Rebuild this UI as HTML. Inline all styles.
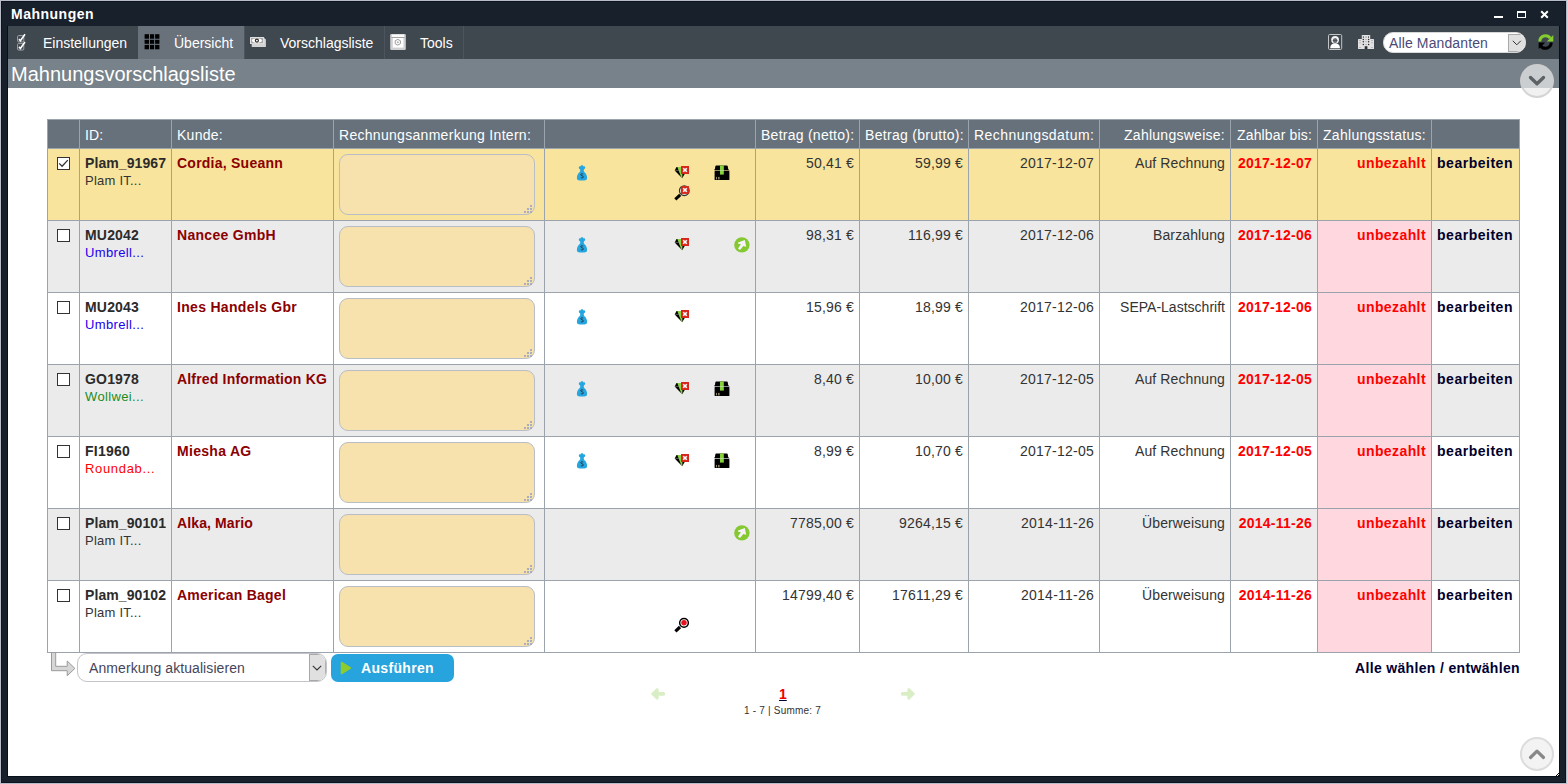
<!DOCTYPE html>
<html><head><meta charset="utf-8">
<style>
*{margin:0;padding:0;box-sizing:border-box}
html,body{width:1567px;height:784px;overflow:hidden;background:#b8bcc6;font-family:"Liberation Sans",sans-serif}
#win{position:absolute;left:1px;top:1px;width:1565px;height:782px;background:#17202b;border:1px solid #0b1420}
.abs{position:absolute}
#wt{position:absolute;left:11px;top:6px;font-size:14px;font-weight:bold;color:#fff;line-height:17px;letter-spacing:0.495px}
#content{position:absolute;left:8px;top:26px;width:1551px;height:750px;background:#fff}
#tb{position:absolute;left:8px;top:26px;width:1551px;height:33px;background:#3f474f}
.tab{position:absolute;top:27px;height:33px;color:#fff;font-size:14px;line-height:33px}
.sep{position:absolute;top:26px;width:1px;height:33px;background:#4d545e}
#title{position:absolute;left:8px;top:59px;width:1551px;height:29px;background:#77828a}
#titletext{position:absolute;left:11px;top:63px;font-size:20px;color:#fff;line-height:23px}
.hd{position:absolute;background:#66717b}
.rb{position:absolute}
.vl{position:absolute;width:1px;background:#9ba3ad}
.hl{position:absolute;height:1px;background:#9ba3ad}
.ht{position:absolute;color:#fff;font-size:14px;line-height:17px;padding:0 5px;white-space:nowrap;letter-spacing:0.28px}
.tx{position:absolute;font-size:14px;line-height:17px;white-space:nowrap;letter-spacing:0.28px}
.tx.b{font-weight:bold}
.tx.s{font-size:13px;letter-spacing:0.24px}
.cb{position:absolute;width:13px;height:13px;border:1px solid #333;background:#fff;padding:0}
.cb svg{position:absolute;left:0;top:0}
.ta{position:absolute;width:196px;height:61px;border:1px solid #b9bdc5;border-radius:9px;background:#f7e1ad}
.grip{position:absolute;left:184px;top:50px}
.ic{position:absolute}
</style></head><body>
<div id="win"></div>
<div id="wt">Mahnungen</div>
<!-- window controls -->
<div class="abs" style="left:1494px;top:16px;width:9px;height:2px;background:#fff"></div>
<div class="abs" style="left:1517px;top:11px;width:9px;height:7px;border:1px solid #fff;border-top-width:2px"></div>
<svg class="abs" style="left:1540px;top:10px" width="9" height="9" viewBox="0 0 9 9"><path d="M1.2 1.2l6.6 6.6M7.8 1.2l-6.6 6.6" stroke="#fff" stroke-width="2"/></svg>
<div class="abs" style="left:7px;top:26px;width:1553px;height:751px;border:1px solid #06101c;border-top:none"></div>
<div id="content"></div>
<div id="tb"></div>
<div class="abs" style="left:138px;top:26px;width:106px;height:33px;background:#69717b"></div>
<div class="sep" style="left:244px"></div>
<div class="sep" style="left:384px"></div>
<div class="sep" style="left:463px"></div>
<!-- tab icons -->
<svg class="abs" style="left:16px;top:33px" width="11" height="18" viewBox="0 0 11 18">
 <rect x="1.6" y="2.6" width="6.2" height="6.2" rx="1" fill="none" stroke="#a4a7ab" stroke-width="1"/>
 <rect x="1.6" y="10.4" width="6.2" height="6.6" rx="1" fill="none" stroke="#a4a7ab" stroke-width="1"/>
 <path d="M3 6.1L4.4 7.7L9 1.2M3 13.9L4.4 15.5L9 9" fill="none" stroke="#fff" stroke-width="1.6"/>
</svg>
<div class="tab" style="left:43px">Einstellungen</div>
<svg class="abs" style="left:144px;top:34px" width="16" height="16" viewBox="0 0 16 16"><g fill="#000">
<rect x="0.6" y="0.2" width="4.4" height="4.5"/><rect x="6" y="0.2" width="4.1" height="4.5"/><rect x="11.1" y="0.2" width="4.3" height="4.5"/>
<rect x="0.6" y="5.8" width="4.4" height="4"/><rect x="6" y="5.8" width="4.1" height="4"/><rect x="11.1" y="5.8" width="4.3" height="4"/>
<rect x="0.6" y="10.9" width="4.4" height="4.4"/><rect x="6" y="10.9" width="4.1" height="4.4"/><rect x="11.1" y="10.9" width="4.3" height="4.4"/></g></svg>
<div class="tab" style="left:174px">Übersicht</div>
<svg class="abs" style="left:250px;top:37px" width="16" height="10" viewBox="0 0 16 10">
 <path d="M1.7 1h12.4l1.8 1.6v7.4h-14.2z" fill="#d4d4d4"/>
 <rect x="0" y="0" width="14.1" height="7.1" rx="0.6" fill="#e6e6e6"/>
 <rect x="1" y="0.9" width="12.1" height="5.3" fill="#a8a8a8"/>
 <ellipse cx="6.9" cy="3.6" rx="5" ry="2.1" fill="#fff"/>
 <circle cx="6.9" cy="3.6" r="1.5" fill="none" stroke="#2a2a2a" stroke-width="1.2"/>
</svg>
<div class="tab" style="left:280px">Vorschlagsliste</div>
<svg class="abs" style="left:390px;top:34px" width="16" height="16" viewBox="0 0 16 16">
 <rect x="0.2" y="0.1" width="15.6" height="15.8" rx="1.2" fill="#d0d0d0"/>
 <rect x="2" y="0.6" width="12" height="2.6" fill="#fafafa"/>
 <rect x="1.5" y="3.2" width="13" height="0.7" fill="#8a8a8a"/>
 <rect x="2.8" y="4" width="10.6" height="9.6" fill="#fff"/>
 <path d="M7.8 5.4l2.6 1.3v3l-2.6 1.4l-2.6-1.4v-3z" fill="none" stroke="#9a9a9a" stroke-width="1"/>
 <circle cx="7.8" cy="8.2" r="1" fill="#b0b0b0"/>
</svg>
<div class="tab" style="left:420px">Tools</div>
<!-- toolbar right -->
<svg class="abs" style="left:1328px;top:34px" width="15" height="16" viewBox="0 0 15 16">
 <rect x="0.5" y="0.5" width="13.2" height="15" rx="1.2" fill="none" stroke="#c4c4c4" stroke-width="1"/>
 <path d="M2.2 14.2c0-3.2 2-4.6 4.9-4.6s4.9 1.4 4.9 4.6z" fill="#fff"/>
 <circle cx="7.1" cy="5.8" r="3.9" fill="#f4f4f4"/>
 <ellipse cx="7.1" cy="6.6" rx="2.3" ry="2.5" fill="#6a6e74"/>
 <path d="M4.9 6.4h4.4" stroke="#4a4e54" stroke-width="0.9"/>
</svg>
<svg class="abs" style="left:1358px;top:35px" width="16" height="14" viewBox="0 0 16 14">
 <g fill="#e2e2e2">
 <rect x="3.8" y="0" width="8.4" height="14" rx="0.6"/>
 <rect x="0" y="4" width="4.2" height="10" rx="0.6"/>
 <rect x="11.8" y="4" width="4.2" height="10" rx="0.6"/>
 </g>
 <g fill="#2a2e34">
 <circle cx="5.3" cy="4.5" r="0.75"/><circle cx="10.6" cy="4.5" r="0.75"/>
 <circle cx="5.3" cy="6.8" r="0.75"/><circle cx="10.6" cy="6.8" r="0.75"/>
 <circle cx="5.3" cy="9.6" r="0.75"/><circle cx="10.6" cy="9.6" r="0.75"/>
 <rect x="4.9" y="1.3" width="0.8" height="1.6"/><rect x="10.2" y="1.3" width="0.8" height="1.6"/>
 <rect x="6.7" y="11.2" width="2.7" height="2.8"/>
 </g>
 <g fill="#9a9a9a">
 <rect x="7.3" y="1.5" width="1.4" height="1.2"/><rect x="7.3" y="4.1" width="1.4" height="0.8"/><rect x="7.3" y="6.4" width="1.4" height="0.8"/><rect x="7.3" y="9.2" width="1.4" height="0.8"/>
 <rect x="1.2" y="5.2" width="1.6" height="0.7"/><rect x="1.2" y="7.5" width="1.6" height="0.7"/><rect x="1.2" y="12" width="1.6" height="0.7"/>
 <rect x="13.2" y="5.2" width="1.6" height="0.7"/><rect x="13.2" y="7.5" width="1.6" height="0.7"/><rect x="13.2" y="12" width="1.6" height="0.7"/>
 </g>
</svg>
<div class="abs" style="left:1383px;top:32px;width:143px;height:21px;border:1px solid #d8d8d8;border-radius:10px;background:#fff;overflow:hidden">
 <div class="abs" style="left:5px;top:2px;font-size:14px;line-height:17px;color:#4a4a78;letter-spacing:0.122px">Alle Mandanten</div>
 <div class="abs" style="left:124px;top:1px;width:20px;height:18px;background:#e0e0e0;border:1px solid #aaa;border-right:none"></div>
 <svg class="abs" style="left:128px;top:7px" width="10" height="6" viewBox="0 0 10 6"><path d="M0.8 0.8l4 4l4-4" fill="none" stroke="#333" stroke-width="1"/></svg>
</div>
<svg class="abs" style="left:1538px;top:34px" width="16" height="16" viewBox="0 0 16 16">
 <path d="M1.8 7.4A5.7 5.7 0 0 1 12.2 4.2" fill="none" stroke="#84cc30" stroke-width="3"/>
 <path d="M8.8 7.4h6.5v-6.3z" fill="#84cc30"/>
 <path d="M13.2 8.6A5.7 5.7 0 0 1 2.8 11.8" fill="none" stroke="#000" stroke-width="3"/>
 <path d="M7.2 8.6h-6.5v6.3z" fill="#000"/>
</svg>
<div id="title"></div>
<div id="titletext">Mahnungsvorschlagsliste</div>
<div class="abs" style="left:1520px;top:64px;width:34px;height:34px;border-radius:50%;background:rgba(236,236,236,0.72);border:2px solid rgba(205,205,205,0.8)"></div>
<svg class="abs" style="left:1527px;top:73px" width="20" height="15" viewBox="0 0 20 15"><path d="M3.5 4.5l6.5 6.3l6.5-6.3" fill="none" stroke="#5d6166" stroke-width="3.3" stroke-linecap="round" stroke-linejoin="round"/></svg>

<div class="hd" style="left:47px;top:119px;width:1473px;height:30px"></div>
<div class="rb" style="left:47px;top:148px;width:1473px;height:73px;background:#f8e49c"></div>
<div class="rb" style="left:47px;top:220px;width:1473px;height:73px;background:#ebebeb"></div>
<div class="rb" style="left:1317px;top:220px;width:115px;height:73px;background:#ffd7de"></div>
<div class="rb" style="left:47px;top:292px;width:1473px;height:73px;background:#ffffff"></div>
<div class="rb" style="left:1317px;top:292px;width:115px;height:73px;background:#ffd7de"></div>
<div class="rb" style="left:47px;top:364px;width:1473px;height:73px;background:#ebebeb"></div>
<div class="rb" style="left:1317px;top:364px;width:115px;height:73px;background:#ffd7de"></div>
<div class="rb" style="left:47px;top:436px;width:1473px;height:73px;background:#ffffff"></div>
<div class="rb" style="left:1317px;top:436px;width:115px;height:73px;background:#ffd7de"></div>
<div class="rb" style="left:47px;top:508px;width:1473px;height:73px;background:#ebebeb"></div>
<div class="rb" style="left:1317px;top:508px;width:115px;height:73px;background:#ffd7de"></div>
<div class="rb" style="left:47px;top:580px;width:1473px;height:73px;background:#ffffff"></div>
<div class="rb" style="left:1317px;top:580px;width:115px;height:73px;background:#ffd7de"></div>
<div class="vl" style="left:47px;top:119px;height:534px"></div>
<div class="vl" style="left:79px;top:119px;height:534px"></div>
<div class="vl" style="left:171px;top:119px;height:534px"></div>
<div class="vl" style="left:333px;top:119px;height:534px"></div>
<div class="vl" style="left:544px;top:119px;height:534px"></div>
<div class="vl" style="left:755px;top:119px;height:534px"></div>
<div class="vl" style="left:859px;top:119px;height:534px"></div>
<div class="vl" style="left:968px;top:119px;height:534px"></div>
<div class="vl" style="left:1099px;top:119px;height:534px"></div>
<div class="vl" style="left:1230px;top:119px;height:534px"></div>
<div class="vl" style="left:1317px;top:119px;height:534px"></div>
<div class="vl" style="left:1431px;top:119px;height:534px"></div>
<div class="vl" style="left:1519px;top:119px;height:534px"></div>
<div class="hl" style="left:47px;top:119px;width:1473px"></div>
<div class="hl" style="left:47px;top:148px;width:1473px"></div>
<div class="hl" style="left:47px;top:220px;width:1473px"></div>
<div class="hl" style="left:47px;top:292px;width:1473px"></div>
<div class="hl" style="left:47px;top:364px;width:1473px"></div>
<div class="hl" style="left:47px;top:436px;width:1473px"></div>
<div class="hl" style="left:47px;top:508px;width:1473px"></div>
<div class="hl" style="left:47px;top:580px;width:1473px"></div>
<div class="hl" style="left:47px;top:652px;width:1473px"></div>
<div class="ht" style="left:80px;top:127px;width:91px;text-align:left;letter-spacing:0.157px;">ID:</div>
<div class="ht" style="left:172px;top:127px;width:161px;text-align:left;letter-spacing:0.255px;">Kunde:</div>
<div class="ht" style="left:334px;top:127px;width:210px;text-align:left;letter-spacing:0.295px;">Rechnungsanmerkung Intern:</div>
<div class="ht" style="left:756px;top:127px;width:103px;text-align:right;letter-spacing:0.257px;">Betrag (netto):</div>
<div class="ht" style="left:860px;top:127px;width:108px;text-align:right;letter-spacing:0.303px;">Betrag (brutto):</div>
<div class="ht" style="left:969px;top:127px;width:130px;text-align:right;letter-spacing:0.448px;">Rechnungsdatum:</div>
<div class="ht" style="left:1100px;top:127px;width:130px;text-align:right;letter-spacing:0.263px;">Zahlungsweise:</div>
<div class="ht" style="left:1231px;top:127px;width:86px;text-align:right;letter-spacing:0.155px;">Zahlbar bis:</div>
<div class="ht" style="left:1318px;top:127px;width:113px;text-align:right;letter-spacing:0.274px;">Zahlungsstatus:</div>
<div class="cb" style="left:57px;top:157px"><svg width="11" height="11" viewBox="0 0 11 11"><path d="M1.2 5.4L4.1 8.3L9.8 2.1" fill="none" stroke="#333" stroke-width="1.3"/></svg></div>
<div class="tx b" style="left:85px;top:155px;color:#2b2b2b;letter-spacing:0.082px;">Plam_91967</div>
<div class="tx s" style="left:85px;top:172px;color:#333;letter-spacing:0.238px;">Plam IT...</div>
<div class="tx b" style="left:177px;top:155px;color:#8b0000;letter-spacing:0.237px;">Cordia, Sueann</div>
<div class="ta" style="left:339px;top:154px"><svg class="grip" width="8" height="8" viewBox="0 0 8 8"><g fill="#a9aeb9"><rect x="6" y="0" width="2" height="2"/><rect x="3" y="3" width="2" height="2"/><rect x="6" y="3" width="2" height="2"/><rect x="0" y="6" width="2" height="2"/><rect x="3" y="6" width="2" height="2"/><rect x="6" y="6" width="2" height="2"/></g></svg></div>
<svg class="ic" style="left:576px;top:164px" width="12" height="17" viewBox="0 0 12 17">
<path d="M6 1.2c0.9 0 1.3 0.6 1.3 1.2c0.9-0.3 1.9 0.1 1.9 1.2c0 0.9-0.6 1.5-1.3 1.9l-0.2 0.5c0 0.9 0.2 1.6 0.6 2.1c1.9 1.5 2.8 3.9 2.8 5.8c0 1.9-1.3 2.5-5.1 2.5s-5.1-0.6-5.1-2.5c0-1.9 0.9-4.3 2.8-5.8c0.4-0.5 0.6-1.2 0.6-2.1l-0.2-0.5c-0.7-0.4-1.3-1-1.3-1.9c0-1.1 1-1.5 1.9-1.2c0-0.6 0.4-1.2 1.3-1.2z" fill="#25a6e0"/>
<path d="M7.2 10.2c-0.3-0.5-2.5-0.7-2.5 0.5c0 1.1 2.7 0.9 2.7 2.3c0 1.1-2 1.1-2.6 0.6" fill="none" stroke="#243a48" stroke-width="1"/></svg>
<svg class="ic" style="left:674px;top:165px" width="16" height="14" viewBox="0 0 16 14">
<path d="M0.7 5.4L2.5 2h9l1.3 3.4l-4.6 7.9z" fill="#000"/>
<path d="M3.3 2h5.2l-0.2 11h-0.8z" fill="#8ad23e"/>
<path d="M0.9 5.4h4" stroke="#888" stroke-width="0.6"/>
<rect x="7" y="1" width="8" height="8" fill="#d8261a"/>
<path d="M9.2 3.2l3.6 3.6M12.8 3.2l-3.6 3.6" stroke="#f4ffff" stroke-width="1.6"/></svg>
<svg class="ic" style="left:714px;top:164px" width="16" height="17" viewBox="0 0 16 17">
<path d="M3 1.5h9.8q0.9 0 1 1l0.3 2.2l0.6 0.7v0.7h-14.3v-0.7l0.6-0.7l0.3-2.2q0.1-1 1-1z" fill="#000"/>
<rect x="0.6" y="7" width="14.8" height="9.1" rx="0.5" fill="#000"/>
<rect x="0.6" y="6.1" width="14.8" height="0.9" fill="#000" fill-opacity="0.45"/>
<path d="M6 1.5h3.8v9.1h-3.8z" fill="#86d23a"/>
<path d="M6 6.1h3.8v0.9h-3.8z" fill="#b8d890"/>
<rect x="2" y="12.9" width="0.9" height="2.5" fill="#a09a78"/><rect x="4.2" y="12.9" width="1.3" height="2.5" fill="#a09a78"/></svg>
<svg class="ic" style="left:674px;top:185px" width="16" height="16" viewBox="0 0 16 16">
<circle cx="10.3" cy="5.7" r="4.9" fill="#d8d8c8" stroke="#333" stroke-width="1.1"/>
<path d="M1.3 14.4L6.2 9.8" stroke="#000" stroke-width="3"/>
<rect x="7" y="1.1" width="8" height="7.8" fill="#d8261a"/>
<path d="M9.2 3.2l3.6 3.6M12.8 3.2l-3.6 3.6" stroke="#f4ffff" stroke-width="1.6"/></svg>
<div class="tx" style="right:713px;top:155px;color:#333;letter-spacing:0.184px;">50,41 €</div>
<div class="tx" style="right:604px;top:155px;color:#333;letter-spacing:0.184px;">59,99 €</div>
<div class="tx" style="right:473px;top:155px;color:#333;letter-spacing:0.239px;">2017-12-07</div>
<div class="tx" style="right:342px;top:155px;color:#333;letter-spacing:0.106px;">Auf Rechnung</div>
<div class="tx b" style="right:255px;top:155px;color:#ff0000;letter-spacing:0.239px;">2017-12-07</div>
<div class="tx b" style="right:141px;top:155px;color:#ff0000;letter-spacing:0.408px;">unbezahlt</div>
<div class="tx b" style="left:1437px;top:155px;color:#00002b;letter-spacing:0.520px;">bearbeiten</div>
<div class="cb" style="left:57px;top:229px"></div>
<div class="tx b" style="left:85px;top:227px;color:#2b2b2b;letter-spacing:0.181px;">MU2042</div>
<div class="tx s" style="left:85px;top:244px;color:#2200ee;letter-spacing:0.358px;">Umbrell...</div>
<div class="tx b" style="left:177px;top:227px;color:#8b0000;letter-spacing:0.300px;">Nancee GmbH</div>
<div class="ta" style="left:339px;top:226px"><svg class="grip" width="8" height="8" viewBox="0 0 8 8"><g fill="#a9aeb9"><rect x="6" y="0" width="2" height="2"/><rect x="3" y="3" width="2" height="2"/><rect x="6" y="3" width="2" height="2"/><rect x="0" y="6" width="2" height="2"/><rect x="3" y="6" width="2" height="2"/><rect x="6" y="6" width="2" height="2"/></g></svg></div>
<svg class="ic" style="left:576px;top:236px" width="12" height="17" viewBox="0 0 12 17">
<path d="M6 1.2c0.9 0 1.3 0.6 1.3 1.2c0.9-0.3 1.9 0.1 1.9 1.2c0 0.9-0.6 1.5-1.3 1.9l-0.2 0.5c0 0.9 0.2 1.6 0.6 2.1c1.9 1.5 2.8 3.9 2.8 5.8c0 1.9-1.3 2.5-5.1 2.5s-5.1-0.6-5.1-2.5c0-1.9 0.9-4.3 2.8-5.8c0.4-0.5 0.6-1.2 0.6-2.1l-0.2-0.5c-0.7-0.4-1.3-1-1.3-1.9c0-1.1 1-1.5 1.9-1.2c0-0.6 0.4-1.2 1.3-1.2z" fill="#25a6e0"/>
<path d="M7.2 10.2c-0.3-0.5-2.5-0.7-2.5 0.5c0 1.1 2.7 0.9 2.7 2.3c0 1.1-2 1.1-2.6 0.6" fill="none" stroke="#243a48" stroke-width="1"/></svg>
<svg class="ic" style="left:674px;top:237px" width="16" height="14" viewBox="0 0 16 14">
<path d="M0.7 5.4L2.5 2h9l1.3 3.4l-4.6 7.9z" fill="#000"/>
<path d="M3.3 2h5.2l-0.2 11h-0.8z" fill="#8ad23e"/>
<path d="M0.9 5.4h4" stroke="#888" stroke-width="0.6"/>
<rect x="7" y="1" width="8" height="8" fill="#d8261a"/>
<path d="M9.2 3.2l3.6 3.6M12.8 3.2l-3.6 3.6" stroke="#f4ffff" stroke-width="1.6"/></svg>
<svg class="ic" style="left:734px;top:237px" width="16" height="16" viewBox="0 0 16 16">
<circle cx="7.9" cy="7.9" r="7.7" fill="#86c832"/>
<path d="M10.8 3L4 5.5L4.2 6.7L6.9 7.3L4 11.6L6 13L9.3 8.9L12.2 9.8Z" fill="#f6f3f8"/></svg>
<div class="tx" style="right:713px;top:227px;color:#333;letter-spacing:0.184px;">98,31 €</div>
<div class="tx" style="right:604px;top:227px;color:#333;letter-spacing:0.188px;">116,99 €</div>
<div class="tx" style="right:473px;top:227px;color:#333;letter-spacing:0.239px;">2017-12-06</div>
<div class="tx" style="right:342px;top:227px;color:#333;letter-spacing:0.117px;">Barzahlung</div>
<div class="tx b" style="right:255px;top:227px;color:#ff0000;letter-spacing:0.239px;">2017-12-06</div>
<div class="tx b" style="right:141px;top:227px;color:#ff0000;letter-spacing:0.408px;">unbezahlt</div>
<div class="tx b" style="left:1437px;top:227px;color:#00002b;letter-spacing:0.520px;">bearbeiten</div>
<div class="cb" style="left:57px;top:301px"></div>
<div class="tx b" style="left:85px;top:299px;color:#2b2b2b;letter-spacing:0.181px;">MU2043</div>
<div class="tx s" style="left:85px;top:316px;color:#2200ee;letter-spacing:0.358px;">Umbrell...</div>
<div class="tx b" style="left:177px;top:299px;color:#8b0000;letter-spacing:0.303px;">Ines Handels Gbr</div>
<div class="ta" style="left:339px;top:298px"><svg class="grip" width="8" height="8" viewBox="0 0 8 8"><g fill="#a9aeb9"><rect x="6" y="0" width="2" height="2"/><rect x="3" y="3" width="2" height="2"/><rect x="6" y="3" width="2" height="2"/><rect x="0" y="6" width="2" height="2"/><rect x="3" y="6" width="2" height="2"/><rect x="6" y="6" width="2" height="2"/></g></svg></div>
<svg class="ic" style="left:576px;top:308px" width="12" height="17" viewBox="0 0 12 17">
<path d="M6 1.2c0.9 0 1.3 0.6 1.3 1.2c0.9-0.3 1.9 0.1 1.9 1.2c0 0.9-0.6 1.5-1.3 1.9l-0.2 0.5c0 0.9 0.2 1.6 0.6 2.1c1.9 1.5 2.8 3.9 2.8 5.8c0 1.9-1.3 2.5-5.1 2.5s-5.1-0.6-5.1-2.5c0-1.9 0.9-4.3 2.8-5.8c0.4-0.5 0.6-1.2 0.6-2.1l-0.2-0.5c-0.7-0.4-1.3-1-1.3-1.9c0-1.1 1-1.5 1.9-1.2c0-0.6 0.4-1.2 1.3-1.2z" fill="#25a6e0"/>
<path d="M7.2 10.2c-0.3-0.5-2.5-0.7-2.5 0.5c0 1.1 2.7 0.9 2.7 2.3c0 1.1-2 1.1-2.6 0.6" fill="none" stroke="#243a48" stroke-width="1"/></svg>
<svg class="ic" style="left:674px;top:309px" width="16" height="14" viewBox="0 0 16 14">
<path d="M0.7 5.4L2.5 2h9l1.3 3.4l-4.6 7.9z" fill="#000"/>
<path d="M3.3 2h5.2l-0.2 11h-0.8z" fill="#8ad23e"/>
<path d="M0.9 5.4h4" stroke="#888" stroke-width="0.6"/>
<rect x="7" y="1" width="8" height="8" fill="#d8261a"/>
<path d="M9.2 3.2l3.6 3.6M12.8 3.2l-3.6 3.6" stroke="#f4ffff" stroke-width="1.6"/></svg>
<div class="tx" style="right:713px;top:299px;color:#333;letter-spacing:0.184px;">15,96 €</div>
<div class="tx" style="right:604px;top:299px;color:#333;letter-spacing:0.184px;">18,99 €</div>
<div class="tx" style="right:473px;top:299px;color:#333;letter-spacing:0.239px;">2017-12-06</div>
<div class="tx" style="right:342px;top:299px;color:#333;letter-spacing:0.012px;">SEPA-Lastschrift</div>
<div class="tx b" style="right:255px;top:299px;color:#ff0000;letter-spacing:0.239px;">2017-12-06</div>
<div class="tx b" style="right:141px;top:299px;color:#ff0000;letter-spacing:0.408px;">unbezahlt</div>
<div class="tx b" style="left:1437px;top:299px;color:#00002b;letter-spacing:0.520px;">bearbeiten</div>
<div class="cb" style="left:57px;top:373px"></div>
<div class="tx b" style="left:85px;top:371px;color:#2b2b2b;letter-spacing:0.179px;">GO1978</div>
<div class="tx s" style="left:85px;top:388px;color:#1e8c1e;letter-spacing:0.368px;">Wollwei...</div>
<div class="tx b" style="left:177px;top:371px;color:#8b0000;letter-spacing:0.180px;">Alfred Information KG</div>
<div class="ta" style="left:339px;top:370px"><svg class="grip" width="8" height="8" viewBox="0 0 8 8"><g fill="#a9aeb9"><rect x="6" y="0" width="2" height="2"/><rect x="3" y="3" width="2" height="2"/><rect x="6" y="3" width="2" height="2"/><rect x="0" y="6" width="2" height="2"/><rect x="3" y="6" width="2" height="2"/><rect x="6" y="6" width="2" height="2"/></g></svg></div>
<svg class="ic" style="left:576px;top:380px" width="12" height="17" viewBox="0 0 12 17">
<path d="M6 1.2c0.9 0 1.3 0.6 1.3 1.2c0.9-0.3 1.9 0.1 1.9 1.2c0 0.9-0.6 1.5-1.3 1.9l-0.2 0.5c0 0.9 0.2 1.6 0.6 2.1c1.9 1.5 2.8 3.9 2.8 5.8c0 1.9-1.3 2.5-5.1 2.5s-5.1-0.6-5.1-2.5c0-1.9 0.9-4.3 2.8-5.8c0.4-0.5 0.6-1.2 0.6-2.1l-0.2-0.5c-0.7-0.4-1.3-1-1.3-1.9c0-1.1 1-1.5 1.9-1.2c0-0.6 0.4-1.2 1.3-1.2z" fill="#25a6e0"/>
<path d="M7.2 10.2c-0.3-0.5-2.5-0.7-2.5 0.5c0 1.1 2.7 0.9 2.7 2.3c0 1.1-2 1.1-2.6 0.6" fill="none" stroke="#243a48" stroke-width="1"/></svg>
<svg class="ic" style="left:674px;top:381px" width="16" height="14" viewBox="0 0 16 14">
<path d="M0.7 5.4L2.5 2h9l1.3 3.4l-4.6 7.9z" fill="#000"/>
<path d="M3.3 2h5.2l-0.2 11h-0.8z" fill="#8ad23e"/>
<path d="M0.9 5.4h4" stroke="#888" stroke-width="0.6"/>
<rect x="7" y="1" width="8" height="8" fill="#d8261a"/>
<path d="M9.2 3.2l3.6 3.6M12.8 3.2l-3.6 3.6" stroke="#f4ffff" stroke-width="1.6"/></svg>
<svg class="ic" style="left:714px;top:380px" width="16" height="17" viewBox="0 0 16 17">
<path d="M3 1.5h9.8q0.9 0 1 1l0.3 2.2l0.6 0.7v0.7h-14.3v-0.7l0.6-0.7l0.3-2.2q0.1-1 1-1z" fill="#000"/>
<rect x="0.6" y="7" width="14.8" height="9.1" rx="0.5" fill="#000"/>
<rect x="0.6" y="6.1" width="14.8" height="0.9" fill="#000" fill-opacity="0.45"/>
<path d="M6 1.5h3.8v9.1h-3.8z" fill="#86d23a"/>
<path d="M6 6.1h3.8v0.9h-3.8z" fill="#b8d890"/>
<rect x="2" y="12.9" width="0.9" height="2.5" fill="#a09a78"/><rect x="4.2" y="12.9" width="1.3" height="2.5" fill="#a09a78"/></svg>
<div class="tx" style="right:713px;top:371px;color:#333;letter-spacing:0.179px;">8,40 €</div>
<div class="tx" style="right:604px;top:371px;color:#333;letter-spacing:0.184px;">10,00 €</div>
<div class="tx" style="right:473px;top:371px;color:#333;letter-spacing:0.239px;">2017-12-05</div>
<div class="tx" style="right:342px;top:371px;color:#333;letter-spacing:0.106px;">Auf Rechnung</div>
<div class="tx b" style="right:255px;top:371px;color:#ff0000;letter-spacing:0.239px;">2017-12-05</div>
<div class="tx b" style="right:141px;top:371px;color:#ff0000;letter-spacing:0.408px;">unbezahlt</div>
<div class="tx b" style="left:1437px;top:371px;color:#00002b;letter-spacing:0.520px;">bearbeiten</div>
<div class="cb" style="left:57px;top:445px"></div>
<div class="tx b" style="left:85px;top:443px;color:#2b2b2b;letter-spacing:0.236px;">FI1960</div>
<div class="tx s" style="left:85px;top:460px;color:#ff0000;letter-spacing:0.670px;">Roundab...</div>
<div class="tx b" style="left:177px;top:443px;color:#8b0000;letter-spacing:0.294px;">Miesha AG</div>
<div class="ta" style="left:339px;top:442px"><svg class="grip" width="8" height="8" viewBox="0 0 8 8"><g fill="#a9aeb9"><rect x="6" y="0" width="2" height="2"/><rect x="3" y="3" width="2" height="2"/><rect x="6" y="3" width="2" height="2"/><rect x="0" y="6" width="2" height="2"/><rect x="3" y="6" width="2" height="2"/><rect x="6" y="6" width="2" height="2"/></g></svg></div>
<svg class="ic" style="left:576px;top:452px" width="12" height="17" viewBox="0 0 12 17">
<path d="M6 1.2c0.9 0 1.3 0.6 1.3 1.2c0.9-0.3 1.9 0.1 1.9 1.2c0 0.9-0.6 1.5-1.3 1.9l-0.2 0.5c0 0.9 0.2 1.6 0.6 2.1c1.9 1.5 2.8 3.9 2.8 5.8c0 1.9-1.3 2.5-5.1 2.5s-5.1-0.6-5.1-2.5c0-1.9 0.9-4.3 2.8-5.8c0.4-0.5 0.6-1.2 0.6-2.1l-0.2-0.5c-0.7-0.4-1.3-1-1.3-1.9c0-1.1 1-1.5 1.9-1.2c0-0.6 0.4-1.2 1.3-1.2z" fill="#25a6e0"/>
<path d="M7.2 10.2c-0.3-0.5-2.5-0.7-2.5 0.5c0 1.1 2.7 0.9 2.7 2.3c0 1.1-2 1.1-2.6 0.6" fill="none" stroke="#243a48" stroke-width="1"/></svg>
<svg class="ic" style="left:674px;top:453px" width="16" height="14" viewBox="0 0 16 14">
<path d="M0.7 5.4L2.5 2h9l1.3 3.4l-4.6 7.9z" fill="#000"/>
<path d="M3.3 2h5.2l-0.2 11h-0.8z" fill="#8ad23e"/>
<path d="M0.9 5.4h4" stroke="#888" stroke-width="0.6"/>
<rect x="7" y="1" width="8" height="8" fill="#d8261a"/>
<path d="M9.2 3.2l3.6 3.6M12.8 3.2l-3.6 3.6" stroke="#f4ffff" stroke-width="1.6"/></svg>
<svg class="ic" style="left:714px;top:452px" width="16" height="17" viewBox="0 0 16 17">
<path d="M3 1.5h9.8q0.9 0 1 1l0.3 2.2l0.6 0.7v0.7h-14.3v-0.7l0.6-0.7l0.3-2.2q0.1-1 1-1z" fill="#000"/>
<rect x="0.6" y="7" width="14.8" height="9.1" rx="0.5" fill="#000"/>
<rect x="0.6" y="6.1" width="14.8" height="0.9" fill="#000" fill-opacity="0.45"/>
<path d="M6 1.5h3.8v9.1h-3.8z" fill="#86d23a"/>
<path d="M6 6.1h3.8v0.9h-3.8z" fill="#b8d890"/>
<rect x="2" y="12.9" width="0.9" height="2.5" fill="#a09a78"/><rect x="4.2" y="12.9" width="1.3" height="2.5" fill="#a09a78"/></svg>
<div class="tx" style="right:713px;top:443px;color:#333;letter-spacing:0.179px;">8,99 €</div>
<div class="tx" style="right:604px;top:443px;color:#333;letter-spacing:0.184px;">10,70 €</div>
<div class="tx" style="right:473px;top:443px;color:#333;letter-spacing:0.239px;">2017-12-05</div>
<div class="tx" style="right:342px;top:443px;color:#333;letter-spacing:0.106px;">Auf Rechnung</div>
<div class="tx b" style="right:255px;top:443px;color:#ff0000;letter-spacing:0.239px;">2017-12-05</div>
<div class="tx b" style="right:141px;top:443px;color:#ff0000;letter-spacing:0.408px;">unbezahlt</div>
<div class="tx b" style="left:1437px;top:443px;color:#00002b;letter-spacing:0.520px;">bearbeiten</div>
<div class="cb" style="left:57px;top:517px"></div>
<div class="tx b" style="left:85px;top:515px;color:#2b2b2b;letter-spacing:0.082px;">Plam_90101</div>
<div class="tx s" style="left:85px;top:532px;color:#333;letter-spacing:0.238px;">Plam IT...</div>
<div class="tx b" style="left:177px;top:515px;color:#8b0000;letter-spacing:0.119px;">Alka, Mario</div>
<div class="ta" style="left:339px;top:514px"><svg class="grip" width="8" height="8" viewBox="0 0 8 8"><g fill="#a9aeb9"><rect x="6" y="0" width="2" height="2"/><rect x="3" y="3" width="2" height="2"/><rect x="6" y="3" width="2" height="2"/><rect x="0" y="6" width="2" height="2"/><rect x="3" y="6" width="2" height="2"/><rect x="6" y="6" width="2" height="2"/></g></svg></div>
<svg class="ic" style="left:734px;top:525px" width="16" height="16" viewBox="0 0 16 16">
<circle cx="7.9" cy="7.9" r="7.7" fill="#86c832"/>
<path d="M10.8 3L4 5.5L4.2 6.7L6.9 7.3L4 11.6L6 13L9.3 8.9L12.2 9.8Z" fill="#f6f3f8"/></svg>
<div class="tx" style="right:713px;top:515px;color:#333;letter-spacing:0.191px;">7785,00 €</div>
<div class="tx" style="right:604px;top:515px;color:#333;letter-spacing:0.191px;">9264,15 €</div>
<div class="tx" style="right:473px;top:515px;color:#333;letter-spacing:0.239px;">2014-11-26</div>
<div class="tx" style="right:342px;top:515px;color:#333;letter-spacing:0.117px;">Überweisung</div>
<div class="tx b" style="right:255px;top:515px;color:#ff0000;letter-spacing:0.239px;">2014-11-26</div>
<div class="tx b" style="right:141px;top:515px;color:#ff0000;letter-spacing:0.408px;">unbezahlt</div>
<div class="tx b" style="left:1437px;top:515px;color:#00002b;letter-spacing:0.520px;">bearbeiten</div>
<div class="cb" style="left:57px;top:589px"></div>
<div class="tx b" style="left:85px;top:587px;color:#2b2b2b;letter-spacing:0.082px;">Plam_90102</div>
<div class="tx s" style="left:85px;top:604px;color:#333;letter-spacing:0.238px;">Plam IT...</div>
<div class="tx b" style="left:177px;top:587px;color:#8b0000;letter-spacing:0.227px;">American Bagel</div>
<div class="ta" style="left:339px;top:586px"><svg class="grip" width="8" height="8" viewBox="0 0 8 8"><g fill="#a9aeb9"><rect x="6" y="0" width="2" height="2"/><rect x="3" y="3" width="2" height="2"/><rect x="6" y="3" width="2" height="2"/><rect x="0" y="6" width="2" height="2"/><rect x="3" y="6" width="2" height="2"/><rect x="6" y="6" width="2" height="2"/></g></svg></div>
<svg class="ic" style="left:674px;top:617px" width="16" height="16" viewBox="0 0 16 16">
<circle cx="10" cy="5.8" r="4.35" fill="#fff" stroke="#000" stroke-width="1.5"/>
<circle cx="10" cy="5.8" r="2.75" fill="#e8101c"/>
<path d="M1.4 14.3L6 10" stroke="#000" stroke-width="3.2"/></svg>
<div class="tx" style="right:713px;top:587px;color:#333;letter-spacing:0.193px;">14799,40 €</div>
<div class="tx" style="right:604px;top:587px;color:#333;letter-spacing:0.193px;">17611,29 €</div>
<div class="tx" style="right:473px;top:587px;color:#333;letter-spacing:0.239px;">2014-11-26</div>
<div class="tx" style="right:342px;top:587px;color:#333;letter-spacing:0.117px;">Überweisung</div>
<div class="tx b" style="right:255px;top:587px;color:#ff0000;letter-spacing:0.239px;">2014-11-26</div>
<div class="tx b" style="right:141px;top:587px;color:#ff0000;letter-spacing:0.408px;">unbezahlt</div>
<div class="tx b" style="left:1437px;top:587px;color:#00002b;letter-spacing:0.520px;">bearbeiten</div>

<!-- bottom -->
<svg class="abs" style="left:51px;top:652px" width="25" height="25" viewBox="0 0 25 25">
 <path d="M0.5 0.5H4.7V14.3H16.2V9L23.9 16.4L16.2 23.8V18.7H0.5Z" fill="#d6d6d6" stroke="#9a9a9a" stroke-width="1"/>
</svg>
<div class="abs" style="left:77px;top:653px;width:250px;height:29px;border:1px solid #c4c4c8;border-radius:10px;background:#fff;overflow:hidden">
 <div class="abs" style="left:11px;top:6px;font-size:14px;line-height:17px;color:#45455a;letter-spacing:0.08px">Anmerkung aktualisieren</div>
 <div class="abs" style="left:231px;top:0;width:20px;height:27px;background:#e0e0e0;border:1px solid #a8a8a8;border-right:none"></div>
 <div class="abs" style="left:247px;top:2px;width:1px;height:23px;background:#b0b0b0"></div>
 <svg class="abs" style="left:234px;top:11px" width="10" height="6" viewBox="0 0 10 6"><path d="M0.8 0.8l4.2 4.2l4.2-4.2" fill="none" stroke="#333" stroke-width="1.1"/></svg>
</div>
<div class="abs" style="left:331px;top:654px;width:123px;height:28px;border-radius:7px;background:#27a3de"></div>
<svg class="abs" style="left:340px;top:661px" width="12" height="14" viewBox="0 0 12 14"><path d="M1.5 1.5L10.3 7L1.5 12.5z" fill="#8ecb2c" stroke="#8ecb2c" stroke-width="1.6" stroke-linejoin="round"/></svg>
<div class="abs" style="left:361px;top:660px;font-size:14px;line-height:17px;font-weight:bold;color:#fff;letter-spacing:0.333px">Ausführen</div>
<div class="abs" style="left:1355px;top:660px;font-size:14px;line-height:17px;font-weight:bold;color:#000033;letter-spacing:0.34px">Alle wählen / entwählen</div>
<!-- pagination -->
<svg class="abs" style="left:650px;top:687px" width="16" height="14" viewBox="0 0 16 14"><g fill="#d9eec4" stroke="#d9eec4" stroke-linejoin="round" stroke-width="1.6"><path d="M2 6.9L7.1 1.9L7.9 2.7V11.1L7.1 11.9Z"/><rect x="7.6" y="5.9" width="6.8" height="2.1" rx="1"/></g></svg>
<svg class="abs" style="left:900px;top:687px" width="16" height="14" viewBox="0 0 16 14"><g fill="#d9eec4" stroke="#d9eec4" stroke-linejoin="round" stroke-width="1.6"><path d="M14 6.9L8.9 1.9L8.1 2.7V11.1L8.9 11.9Z"/><rect x="1.6" y="5.9" width="6.8" height="2.1" rx="1"/></g></svg>
<div class="abs" style="left:779px;top:686px;font-size:14px;line-height:17px;font-weight:bold;color:#ee0000;text-decoration:underline;text-decoration-color:#000033">1</div>
<div class="abs" style="left:744px;top:705px;font-size:10px;line-height:12px;color:#333;letter-spacing:0.2px">1 - 7 | Summe: 7</div>
<!-- grip -->
<div class="abs" style="left:1558px;top:773px;width:1px;height:1px;background:#000"></div>
<div class="abs" style="left:1557px;top:774px;width:1px;height:1px;background:#000"></div>
<div class="abs" style="left:1556px;top:775px;width:1px;height:1px;background:#000"></div>
<div class="abs" style="left:1558px;top:775px;width:1px;height:1px;background:#000"></div>
<div class="abs" style="left:1557px;top:775px;width:1px;height:1px;background:#fff"></div>
<div class="abs" style="left:1558px;top:774px;width:1px;height:1px;background:#fff"></div>
<!-- scroll up -->
<div class="abs" style="left:1520px;top:737px;width:34px;height:34px;border-radius:50%;background:#f3f3f3;border:2px solid #dcdcdc"></div>
<svg class="abs" style="left:1527px;top:747px" width="20" height="14" viewBox="0 0 20 14"><path d="M3.5 10.5l6.5-6.3l6.5 6.3" fill="none" stroke="#888" stroke-width="3.2" stroke-linecap="round" stroke-linejoin="round"/></svg>
</body></html>
